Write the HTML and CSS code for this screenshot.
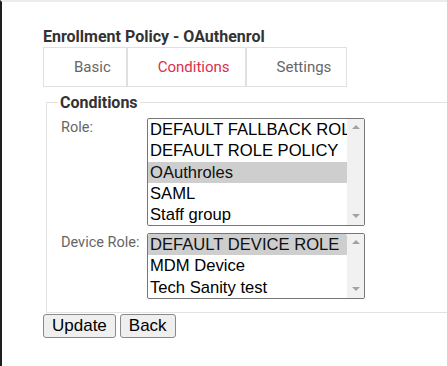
FILE: index.html
```html
<!DOCTYPE html>
<html lang="en">
<head>
  <meta charset="UTF-8" />
  <title>Enrollment Policy - OAuthenrol</title>
  <link rel="stylesheet" href="styles.css">
</head>
<body>
  <div class="page">
    <h1 class="title">Enrollment Policy - OAuthenrol</h1>

    <div class="tabs">
      <a class="tab">Basic</a>
      <a class="tab active">Conditions</a>
      <a class="tab">Settings</a>
    </div>

    <form>
      <fieldset class="conditions">
        <legend>Conditions</legend>

        <div class="field">
          <label for="role">Role:</label>
          <div class="listbox list-role">
            <select id="role" multiple size="5">
              <option>DEFAULT FALLBACK ROLE</option>
              <option>DEFAULT ROLE POLICY</option>
              <option selected>OAuthroles</option>
              <option>SAML</option>
              <option>Staff group</option>
            </select>
            <div class="scrollbar"><span class="arrow up"></span><span class="arrow down"></span></div>
          </div>
        </div>

        <div class="field">
          <label for="deviceRole">Device Role:</label>
          <div class="listbox list-device">
            <select id="deviceRole" multiple size="3">
              <option selected>DEFAULT DEVICE ROLE</option>
              <option>MDM Device</option>
              <option>Tech Sanity test</option>
            </select>
            <div class="scrollbar"><span class="arrow up"></span><span class="arrow down"></span></div>
          </div>
        </div>
      </fieldset>

      <div class="actions">
        <button type="button">Update</button>
        <button type="button">Back</button>
      </div>
    </form>
  </div>
</body>
</html>
```

FILE: styles.css
```css
html, body {
  height: 100%;
}

body {
  margin: 0;
  box-sizing: border-box;
  border-left: 2px solid #1e1e1e;
  border-top: 2px solid #ececec;
  background: #fff;
  font-family: Roboto, sans-serif;
  color: #333;
}

.page {
  padding: 25px 0 0 41px;
}

.title {
  margin: 0 0 1px;
  font-size: 16px;
  font-weight: bold;
  line-height: 19px;
  color: #333;
}

.tabs {
  display: flex;
}

.tab {
  border: 1px solid #e0e0e0;
  padding: 0 15px 0 30px;
  height: 38px;
  line-height: 38px;
  font-size: 15px;
  color: #666;
}

.tab.active {
  color: #dc2f4e;
}

form {
  margin: 0;
}

.conditions {
  margin: 6px 0 0 3px;
  padding: 6px 0 13px 11px;
  border: 1px solid #e2e2e2;
  border-right: none;
}

.conditions legend {
  padding: 0 2px;
  font-size: 16px;
  font-weight: bold;
  color: #333;
}

.field {
  display: flex;
  align-items: flex-start;
  margin-bottom: 7px;
}

.field:last-child {
  margin-bottom: 0;
}

.field label {
  width: 86px;
  padding: 1px 0 0 3px;
  font-size: 14.5px;
  color: #666;
}

.listbox {
  display: flex;
  width: 216px;
  border: 1px solid #767676;
  border-radius: 2px;
  overflow: hidden;
}

.listbox select {
  flex: 1;
  min-width: 0;
  height: 100%;
  margin: 0;
  padding: 0;
  border: none;
  outline: none;
  overflow: hidden;
  font-family: "Liberation Sans", Arial, sans-serif;
  font-size: 16.6px;
  color: #000;
}

.listbox option {
  padding: 1px 2px 0.3px;
}

.list-role {
  height: 106px;
}

.list-device {
  height: 64px;
}

.scrollbar {
  width: 17px;
  background: #f1f1f1;
  display: flex;
  flex-direction: column;
  justify-content: space-between;
  align-items: center;
  padding: 6px 0 7px;
  box-sizing: border-box;
}

.arrow {
  width: 0;
  height: 0;
  border-left: 4px solid transparent;
  border-right: 4px solid transparent;
}

.arrow.up {
  border-bottom: 4px solid #a3a3a3;
}

.arrow.down {
  border-top: 4px solid #a3a3a3;
}

.actions {
  margin-top: 1px;
}

.actions button {
  margin: 0;
  padding: 0 8px;
  height: 24px;
  font-family: "Liberation Sans", Arial, sans-serif;
  font-size: 17px;
  color: #000;
  background: #efefef;
  border: 1px solid #8a8a8a;
  border-radius: 3px;
}
```
